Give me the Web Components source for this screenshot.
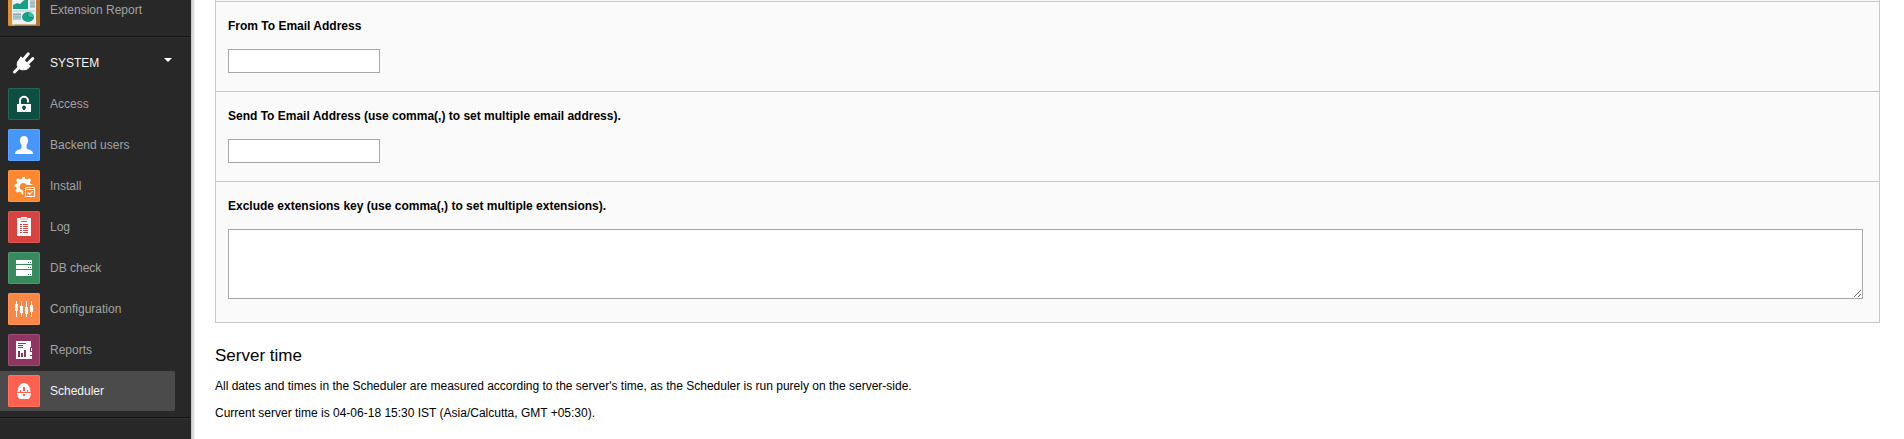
<!DOCTYPE html>
<html lang="en">
<head>
<meta charset="utf-8">
<title>Scheduler</title>
<style>
html,body{margin:0;height:100%;overflow:hidden;background:#fff}
body{font:12px/18px "Liberation Sans",Arial,sans-serif;color:#000}
</style>
</head>
<body>
<backend-shell>
  <module-menu slot="menu">
    <module-item icon="extension" label="Extension Report"></module-item>
    <menu-divider></menu-divider>
    <module-item icon="plug" label="SYSTEM" group></module-item>
    <module-item icon="access" label="Access"></module-item>
    <module-item icon="users" label="Backend users"></module-item>
    <module-item icon="install" label="Install"></module-item>
    <module-item icon="log" label="Log"></module-item>
    <module-item icon="db" label="DB check"></module-item>
    <module-item icon="config" label="Configuration"></module-item>
    <module-item icon="reports" label="Reports"></module-item>
    <module-item icon="scheduler" label="Scheduler" active></module-item>
    <menu-divider></menu-divider>
  </module-menu>
  <form-panel>
    <form-row label="From To Email Address"></form-row>
    <form-row label="Send To Email Address (use comma(,) to set multiple email address)."></form-row>
    <form-row label="Exclude extensions key (use comma(,) to set multiple extensions)." multiline></form-row>
  </form-panel>
  <server-time></server-time>
</backend-shell>
<script>
const define = (name, render) => customElements.define(name, class extends HTMLElement {
  connectedCallback() {
    if (!this.shadowRoot) this.attachShadow({mode: 'open'}).innerHTML = render(this);
  }
});

const tile = (color, inner) => `<rect width="32" height="32" rx="1.5" fill="${color}"/><rect x=".5" y=".5" width="31" height="31" rx="1" fill="none" stroke="#fff" stroke-opacity=".12"/>${inner}`;

const icons = {
  extension: `<rect width="32" height="32" rx="1.5" fill="#e88c31"/><path d="M28 0h2.500a1.500 1.500 0 0 1 1.500 1.500v29a1.500 1.500 0 0 1-1.500 1.500H8l-4-3z" fill="#b8742c"/><rect x="4" y="1" width="24" height="29.500" fill="#edf3f5"/><path d="M5 15V11l4-2 3 1 3-3 5-3v11z" fill="#16a085"/><g fill="#b7c9d0"><path d="M22 6h5v8h-5zM5 19h8v7H5zM5 16.500h22v1H5z"/></g><path d="M5 20.500h8M5 23h8M22 9h5M22 12h5" stroke="#8fa9b3" fill="none"/><ellipse cx="20" cy="23" rx="6" ry="5" fill="#16a085"/><path d="M20 23v-5a6 5 0 0 1 6 5z" fill="#35bd9f"/><path d="M20 18v5l5 1" stroke="#0d806b" fill="none" stroke-width=".7"/>`,
  plug: `<path d="M6.500 25 11 20.500" stroke="#fff" stroke-width="3" stroke-linecap="round"/><path d="M13 9.800 22.200 19C20.500 21.500 19 22.800 15.500 22.800 11.500 23 9 20.500 9.200 17 9.300 14 11.500 13 13 9.800Z" fill="#fff" stroke="#fff" stroke-linejoin="round"/><path d="M15.500 12.500 20.300 6.800M19.800 16.500 24.800 11.500" stroke="#fff" stroke-width="3" stroke-linecap="round"/>`,
  access: tile('#0d4f42', `<path d="M9 16h14v8H9z" fill="#fff"/><path d="M12 16v-3.200a4 4 0 0 1 8 0V14.500" fill="none" stroke="#fff" stroke-width="2"/><path d="M16 17.500a2 2 0 0 1 1 3.700V22h-2v-.800a2 2 0 0 1 1-3.700z" fill="#0d4f42"/>`),
  users: tile('#4597fb', `<path d="M16 7c3 0 4.200 2 4 5-.1 1.700-.8 3-1.500 4v2.500c0 1.300 1 1.600 3 2.200 2.400.8 3.500 1.700 3.500 4.300H7c0-2.600 1.100-3.500 3.500-4.300 2-.6 3-.9 3-2.200V16c-.7-1-1.400-2.300-1.500-4-.2-3 1-5 4-5z" fill="#fff"/>`),
  install: tile('#ff8730', `<path d="M15.300 24.500h-1.600l-.700-2.500-1.500-.600-2.300 1.300-1.800-1.900 1.300-2.200-.600-1.600L6.500 16.500v-2l2.200-.7.600-1.500-1.300-2.300 1.800-1.800 2.300 1.300 1.600-.600.600-2h2.500l.600 2 1.600.600 2.300-1.300 1.800 1.800-1.300 2.300.8 1.700 2 .5v.5H18.500a3.600 3.600 0 1 0-4 5.200l.8 1z" fill="#fff"/><path d="M17.500 17.500h9v9h-9z" fill="#ff8730" stroke="#fff"/><path d="M18 19.500h8" stroke="#fff"/><path d="m19.800 22.500 1.800 1.900 3-3.200" fill="none" stroke="#fff" stroke-width="1.200"/>`),
  log: tile('#d8433f', `<path d="M9 7h3.500l1-1h5l1 1H23v18H9z" fill="#fff"/><path d="M12.500 7.500v.700h7v-.700" fill="none" stroke="#d8433f" stroke-width=".5"/><path d="M13 10.500h6" stroke="#d8433f"/><path d="M12 13.500h2M12 15.500h2M12 17.500h2M12 19.500h2M12 21.500h2M15 13.500h5M15 15.500h5M15 17.500h5M15 19.500h5M15 21.500h5" stroke="#d8433f"/>`),
  db: tile('#378a5d', `<path d="M8 8h16v4H8zM8 13h16v4H8zM8 18h16v6H8z" fill="#fff"/><path d="M20 10h1v1h-1zM22 10h1v1h-1zM20 15h1v1h-1zM22 15h1v1h-1zM20 22h1v1h-1zM22 22h1v1h-1z" fill="#378a5d"/>`),
  config: tile('#fa8745', `<path d="M8.500 8v16M13.500 8v16M18.500 8v16M23.500 8v16" stroke="#fff"/><path d="M7 11h3v7H7zM12 13h3v7h-3zM17 14h3v7h-3zM22 12h3v7h-3z" fill="#fff"/>`),
  reports: tile('#8f355f', `<path d="M8 7h15v6h-1v12H8z" fill="#fff"/><path d="M10 9.500h8M10 11.500h5M10 13.500h5" stroke="#8f355f"/><path d="M10 17h2v6h-2zM13 19h2v4h-2zM16 16h2v7h-2z" fill="#8f355f"/><path d="M23 14h1v3h-1zM22 18h2v3h-2zM22 22h2v3h-2z" fill="#fff"/>`),
  scheduler: tile('#ff6050', `<path d="M9.500 17C9.800 12 12 8 16 8s6.200 4 6.500 9z" fill="#fff"/><path d="M9 18h14c-.2 2.500-1.500 6-3 6h-8c-1.500 0-2.800-3.500-3-6z" fill="#fff"/><path d="M9.500 17h13v1h-13z" fill="#ff6050" opacity=".75"/><path d="M15 12h2v4h-2zM15 19h2v2h-2zM12 15h1v2h-1zM19 15h1v2h-1z" fill="#ff6050"/>`)
};

define('backend-shell', () => `<style>
:host{display:flex;height:100vh;overflow:hidden}
main{flex:1;min-width:0;padding:0 24px 0 20px;overflow:hidden}
.edge{flex:none;width:4px;background:linear-gradient(90deg,#c9c9c9 0 1px,#d9d9d9 1px 2px,#dcdcdc 2px 3px,#f1f1f1 3px)}
</style><slot name="menu"></slot><div class="edge"></div><main><slot></slot></main>`);

define('module-menu', () => `<style>
:host{display:block;flex:none;width:191px;background:#282828}
nav{display:flex;flex-direction:column;gap:1px;margin-top:-10px;width:190px}
</style><nav><slot></slot></nav>`);

define('menu-divider', () => `<style>
:host{display:block;height:1px;margin:5px 0 4px;background:#131313;border-bottom:1px solid #303030}
</style>`);

define('module-item', el => `<style>
:host{display:flex;align-items:center;box-sizing:border-box;width:175px;height:40px;padding-left:8px;color:#a2a2a2;border-radius:0 2px 2px 0}
:host([active]){background:#4b4b4b;color:#f5f5f5}
:host([group]){color:#f5f5f5}
svg{display:block;flex:none;margin-right:10px}
span{flex:1;white-space:nowrap}
i{border:4px solid transparent;border-top-color:#fff;border-bottom:0;margin:-6px 3px 0 0}
</style><svg width="32" height="32" viewBox="0 0 32 32" fill="none">${icons[el.getAttribute('icon')]}</svg><span>${el.getAttribute('label')}</span>${el.hasAttribute('group') ? '<i></i>' : ''}`);

define('form-panel', () => `<style>
:host{display:block;background:#fafafa;border:1px solid #c8c8c8;border-top:0;padding-top:1px}
</style><slot></slot>`);

define('form-row', el => `<style>
:host{display:flex;flex-direction:column;align-items:flex-start;box-sizing:border-box;height:90px;border-top:1px solid #c8c8c8;padding:15px 16px 0 12px}
:host([multiline]){height:141px}
label{font-weight:bold;margin-bottom:14px}
input,textarea{display:block;box-sizing:border-box;margin:0;background:#fff;border:1px solid #a6a6a6;border-radius:0;outline:0}
input{width:152px;height:24px}
textarea{width:100%;height:70px;resize:vertical}
</style><label for="f">${el.getAttribute('label')}</label>${el.hasAttribute('multiline') ? '<textarea id="f"></textarea>' : '<input id="f" type="text">'}`);

define('server-time', () => `<style>
:host{display:block}
h2{font-size:17px;line-height:20px;font-weight:normal;margin:23px 0 11px}
p{margin:0 0 9px}
</style><h2>Server time</h2><p>All dates and times in the Scheduler are measured according to the server's time, as the Scheduler is run purely on the server-side.</p><p>Current server time is 04-06-18 15:30 IST (Asia/Calcutta, GMT +05:30).</p>`);
</script>
</body>
</html>
